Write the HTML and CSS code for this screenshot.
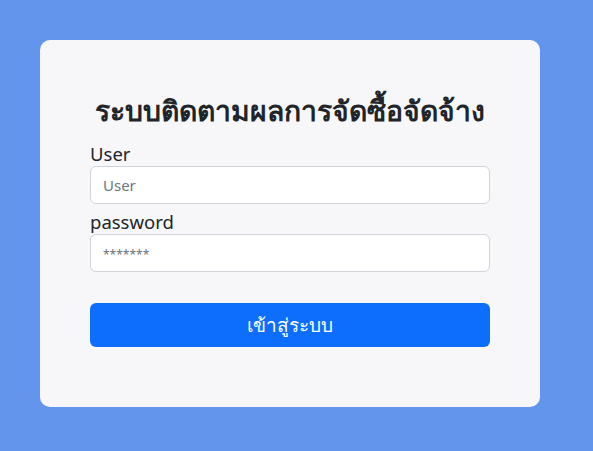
FILE: index.html
```html
<!DOCTYPE html>
<html lang="th">
<head>
<meta charset="utf-8">
<title>Login</title>
<link rel="stylesheet" href="styles.css">
</head>
<body>
<div class="page">
  <div class="card">
    <h1 class="title">ระบบติดตามผลการจัดซื้อจัดจ้าง</h1>
    <form class="form">
      <label class="label" for="user">User</label>
      <input class="input" id="user" type="text" placeholder="User">
      <label class="label" for="pass">password</label>
      <input class="input input-pass" id="pass" type="password" placeholder="*******">
      <button class="btn" type="button">เข้าสู่ระบบ</button>
    </form>
  </div>
</div>
</body>
</html>
```
FILE: styles.css
```css
html, body {
  margin: 0;
  padding: 0;
  height: 100%;
}
body {
  background: #6495ed;
  font-family: "Noto Sans", "Open Sans", "DejaVu Sans", sans-serif;
  color: #212529;
}
.page {
  padding: 40px 53px 0 40px;
}
.card {
  width: 500px;
  height: 367px;
  box-sizing: border-box;
  background: #f7f7f9;
  border-radius: 10px;
  padding: 50px 50px 0 50px;
}
.title {
  margin: 0 0 12px 0;
  font-size: 28.3px;
  font-weight: 700;
  text-align: center;
  line-height: 40px;
}
.form {
  display: flex;
  flex-direction: column;
}
.label {
  font-size: 18.5px;
  line-height: 24px;
}
.input {
  height: 38px;
  box-sizing: border-box;
  border: 1px solid #ced4da;
  border-radius: 6px;
  background: #fff;
  padding: 6px 12px;
  font-size: 15px;
  font-family: inherit;
  color: #212529;
  margin-bottom: 6px;
}
.input::placeholder {
  color: #6c757d;
}
.input-pass::placeholder {
  font-size: 12px;
}
.btn {
  margin-top: 25px;
  height: 44px;
  border: none;
  border-radius: 6px;
  background: #0d6efd;
  color: #fff;
  font-size: 19px;
  font-weight: 500;
  font-family: inherit;
}
```
